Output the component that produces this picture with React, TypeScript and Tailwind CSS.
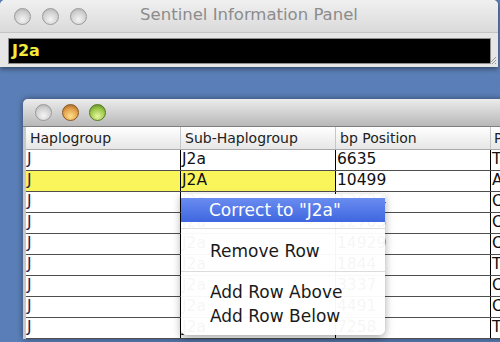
import React from "react";

const font = { fontFamily: '"DejaVu Sans", "Liberation Sans", sans-serif' };

const rows: [string, string, string, string][] = [
  ["J", "J2a", "6635", "T"],
  ["J", "J2A", "10499", "A"],
  ["J", "J2a", "12634", "C"],
  ["J", "J2a", "12705", "C"],
  ["J", "J2a", "14929", "C"],
  ["J", "J2a", "1844", "T"],
  ["J", "J2a", "3337", "C"],
  ["J", "J2a", "4491", "C"],
  ["J", "J2a", "7258", "T"],
];

function Light({ kind }: { kind: "gray" | "orange" | "green" }) {
  const cls =
    kind === "gray"
      ? "bg-[radial-gradient(circle_at_50%_70%,#f4f4f4,#cfcfcf_60%,#a9a9a9)] border-[#9a9a9a]"
      : kind === "orange"
      ? "bg-[radial-gradient(circle_at_50%_75%,#ffe08a,#e2a04a_55%,#9a5a1c)] border-[#8a5520]"
      : "bg-[radial-gradient(circle_at_50%_75%,#e6f7a0,#9cc84a_55%,#557f1c)] border-[#56781f]";
  return <div className={`w-[17px] h-[17px] rounded-full border ${cls}`} />;
}

export default function App() {
  return (
    <div className="relative w-[500px] h-[342px] overflow-hidden bg-[#5a7eb7]" style={font}>
      {/* Top window */}
      <div className="relative z-10 w-[498px] rounded-t-[5px] bg-[#e6e6e6] shadow-[0_2px_5px_rgba(0,0,0,0.45)]">
        <div className="grid grid-cols-[1fr_auto_1fr] items-center h-[32px] rounded-t-[5px] bg-gradient-to-b from-[#f0f0f0] to-[#dadada]">
          <div className="flex items-center gap-[11px] pl-[14px]">
            <Light kind="gray" />
            <Light kind="gray" />
            <Light kind="gray" />
          </div>
          <div className="text-[16.5px] text-[#8c8c8c] leading-none -mt-[1px]">Sentinel Information Panel</div>
          <div />
        </div>
        <div className="relative h-[35px] pl-[8px] pr-[7px] pt-[5px] border-t border-[#c4c4c4]">
          <div className="h-[26px] bg-black border border-[#8e8e8e] shadow-[inset_0_1px_2px_rgba(0,0,0,0.6)] flex items-center pl-[3px]">
            <span className="text-[16px] font-bold text-[#f2ea3c] leading-none">J2a</span>
          </div>
          <svg className="absolute right-[1px] bottom-[2px]" width="10" height="10" viewBox="0 0 10 10">
            <path d="M9 2 L2 9 M9 5 L5 9 M9 8 L8 9" stroke="#9a9a9a" strokeWidth="1" />
          </svg>
        </div>
      </div>

      {/* Second window */}
      <div className="ml-[23px] mt-[32px] w-[490px] rounded-t-[5px] bg-[#b9b9b9] shadow-[0_0_6px_rgba(0,0,0,0.45)]">
        <div className="h-[28px] flex items-center gap-[10px] pl-[12px] rounded-t-[5px] bg-gradient-to-b from-[#ececec] to-[#b8b8b8] border-b border-[#7f7f7f]">
          <Light kind="gray" />
          <Light kind="orange" />
          <Light kind="green" />
        </div>
        <div className="pl-[3px] bg-[#c8c8c8]">
          <div className="bg-white">
            {/* header */}
            <div className="flex h-[23px] bg-gradient-to-b from-[#ffffff] to-[#e6e6e6] border-b border-[#a9a9a9] text-[14px] text-[#222] leading-none">
              <div className="w-[154px] flex items-center pl-[4px]">Haplogroup</div>
              <div className="w-[155px] flex items-center pl-[4px] border-l border-[#c6c6c6]">Sub-Haplogroup</div>
              <div className="w-[155px] flex items-center pl-[4px] border-l border-[#c6c6c6]">bp Position</div>
              <div className="flex-1 flex items-center pl-[3px] border-l border-[#c6c6c6] whitespace-nowrap overflow-hidden">Polymorphism</div>
            </div>
            {rows.map((r, i) => {
              const yellow = i === 1;
              return (
                <div key={i} className="flex h-[21px] border-b border-[#4e4e4e] text-[15.5px] leading-none">
                  <div className={`w-[154px] flex items-center pl-[1px] text-[#1d2856] ${yellow ? "bg-[#fbf55c]" : ""}`}>{r[0]}</div>
                  <div className={`w-[155px] flex items-center pl-[1px] border-l border-black text-[#111] ${yellow ? "bg-[#fbf55c]" : ""}`}>{r[1]}</div>
                  <div className="w-[155px] flex items-center pl-[1px] border-l border-black text-[#111]">{r[2]}</div>
                  <div className="flex-1 flex items-center pl-[1px] border-l border-black text-[#111]">{r[3]}</div>
                </div>
              );
            })}
          </div>
        </div>
      </div>

      {/* Context menu */}
      <div className="absolute left-[181px] top-[194px] w-[204px] h-[141px] bg-[rgba(255,255,255,0.96)] rounded-b-[6px] shadow-[0_3px_8px_rgba(0,0,0,0.35)] pt-[4px] text-[17px] leading-none text-[#1a1a1a]">
        <div className="h-[24px] flex items-center pl-[28px] text-white bg-gradient-to-b from-[#6a8cf0] to-[#3f66df]">Correct to "J2a"</div>
        <div className="h-[17px] pt-[6px]">
          <div className="h-px bg-[#dcdcdc]" />
        </div>
        <div className="h-[24px] flex items-center pl-[29px]">Remove Row</div>
        <div className="h-[17px] pt-[8px]">
          <div className="h-px bg-[#dcdcdc]" />
        </div>
        <div className="h-[24px] flex items-center pl-[29px]">Add Row Above</div>
        <div className="h-[24px] flex items-center pl-[29px]">Add Row Below</div>
      </div>
    </div>
  );
}
